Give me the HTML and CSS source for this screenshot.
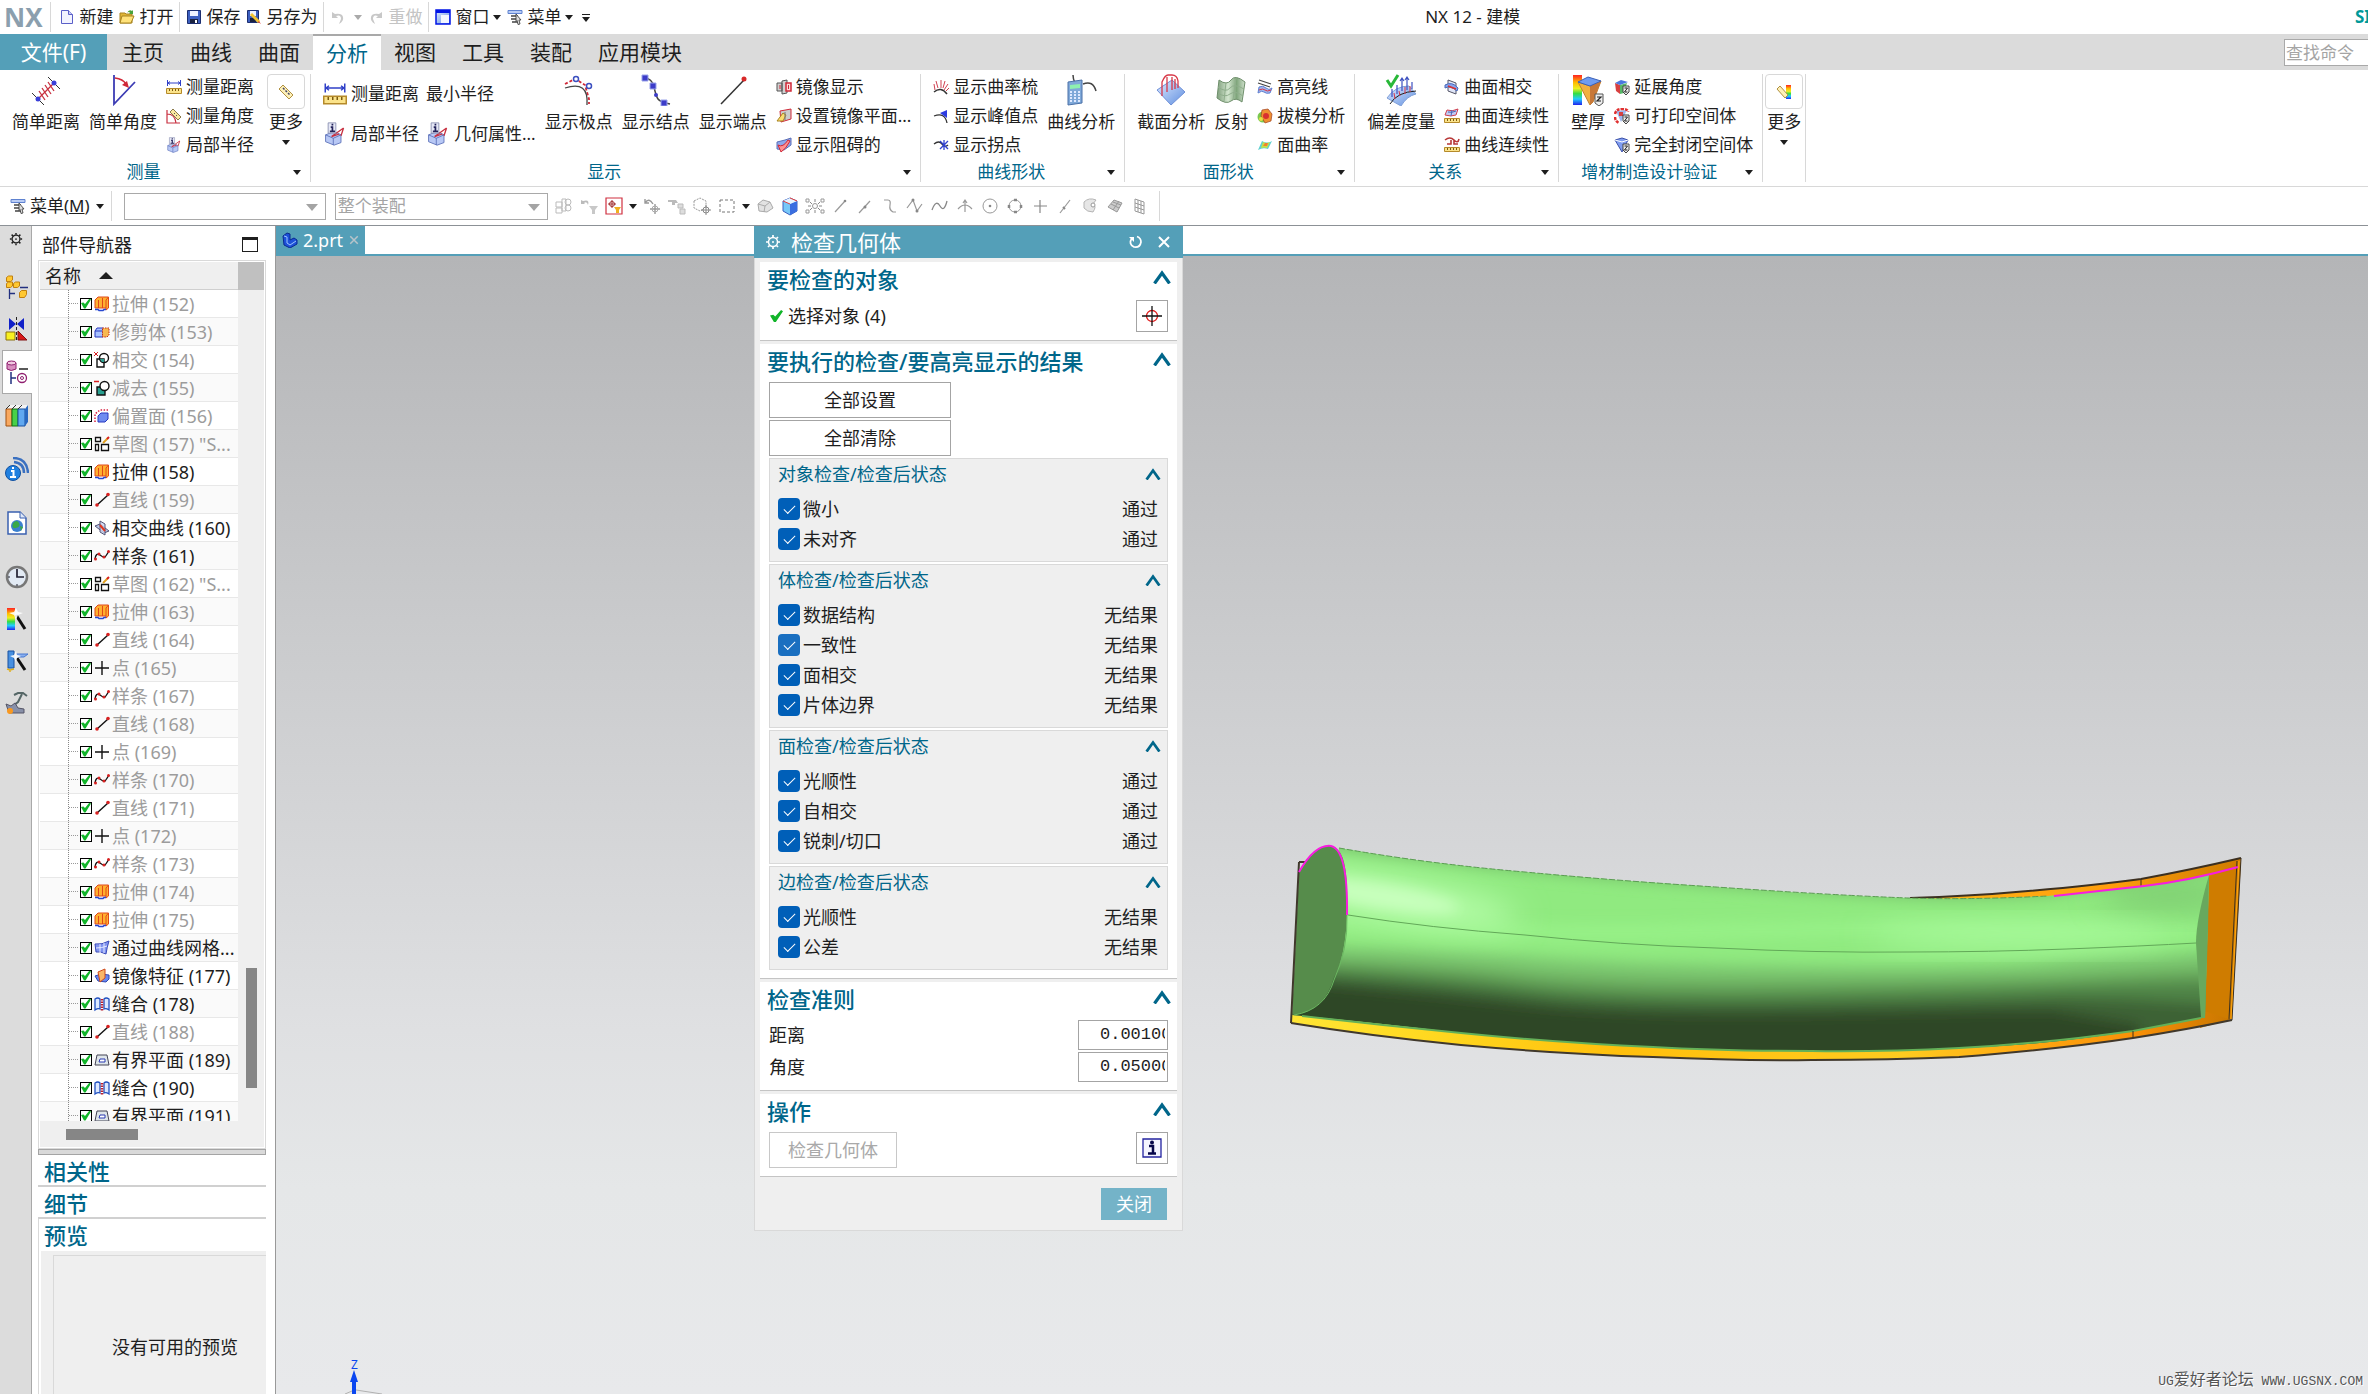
FILE: index.html
```html
<!DOCTYPE html>
<html lang="zh-CN">
<head>
    <meta charset="UTF-8">
    <meta name="viewport" content="width=device-width, initial-scale=1.0">
    <title>NX 12 - 建模</title>
    <link rel="stylesheet" href="styles.css">
</head>
<body>
    <!-- 图标 -->
    <svg class="sprite" aria-hidden="true">
      <defs>
        <linearGradient id="g-rainbow" x1="0" y1="0" x2="0" y2="1">
          <stop offset="0" stop-color="#f22"/><stop offset=".25" stop-color="#fb0"/><stop offset=".45" stop-color="#ee2"/>
          <stop offset=".62" stop-color="#3d4"/><stop offset=".8" stop-color="#2cf"/><stop offset="1" stop-color="#22e"/>
        </linearGradient>
        <linearGradient id="g-blue" x1="0" y1="0" x2="1" y2="1">
          <stop offset="0" stop-color="#dfeaff"/><stop offset="1" stop-color="#5f8fe0"/>
        </linearGradient>
        <linearGradient id="g-green" x1="0" y1="0" x2="1" y2="0">
          <stop offset="0" stop-color="#7f9f7c"/><stop offset=".4" stop-color="#d3e6cf"/><stop offset=".7" stop-color="#7fa57b"/><stop offset="1" stop-color="#cfe0cc"/>
        </linearGradient>
      </defs>
      <symbol id="i-new" viewBox="0 0 16 16"><path d="M2.5 1.500h7l4 4v9h-11z" fill="#f2f3ff" stroke="#5a5fc8"/><path d="M9.500 1.500v4h4" fill="#c9ccf5" stroke="#5a5fc8"/></symbol>
      <symbol id="i-open" viewBox="0 0 16 16"><path d="M1 4h5l1 1h6v9H1z" fill="#e0b535" stroke="#a88420"/><path d="M3 7h12l-3 7H1z" fill="#ffe27a" stroke="#a88420"/><path d="M8 4q2-4 5-2l1-1v4h-4l1-1q-1-2-3 0z" fill="#49a33a"/></symbol>
      <symbol id="i-save" viewBox="0 0 16 16"><path d="M1.500 1.500h13v13h-13z" fill="#3c5fc0" stroke="#1c2e70"/><path d="M4 2h8v5H4z" fill="#eef2ff"/><path d="M4 10h8v4H4z" fill="#1a2240"/><path d="M9 11h2v3H9z" fill="#fff"/></symbol>
      <symbol id="i-saveas" viewBox="0 0 16 16"><path d="M1.500 1.500h11v12h-11z" fill="#3c5fc0" stroke="#1c2e70"/><path d="M4 2h6v5H4z" fill="#eef2ff"/><path d="M4 9h6v4H4z" fill="#1a2240"/><path d="M5 5l8 8" stroke="#f4c430" stroke-width="3"/><path d="M13 12l2 3-3-2z" fill="#d33"/></symbol>
      <symbol id="i-undo" viewBox="0 0 16 16"><path d="M2 3v6h6L6 7q5-2 5 3l-2 5q5-3 4-7T5 5z" fill="#c8c8c8"/></symbol>
      <symbol id="i-redo" viewBox="0 0 16 16"><path d="M14 3v6H8l2-2q-5-2-5 3l2 5Q2 12 3 8t8-3z" fill="#c8c8c8"/></symbol>
      <symbol id="i-window" viewBox="0 0 16 16"><path d="M1 1h14v14H1z" fill="url(#g-blue)" stroke="#0014e6" stroke-width="1.500"/><path d="M1 1h14v3H1z" fill="#0014e6"/><path d="M6 6h8v8H6z" fill="#f2f6ff"/></symbol>
      <symbol id="i-menu" viewBox="0 0 16 16"><path d="M1 1.500h14v3H1z" fill="#b9ccf5" stroke="#5f82d0"/><path d="M4 7h7M4 10h7M5 13h7" stroke="#444" stroke-width="1.500"/><path d="M9 5l5 6h-2l1 4-2 .500-1-4-1 1z" fill="#ddd" stroke="#333" stroke-width=".8"/></symbol>
      <symbol id="i-simpledist" viewBox="0 0 32 32"><path d="M2 19l12 12M18 3l12 12" stroke="#333"/><path d="M8 25L24 9M12 14l6 9M15 11l6 9M18 8l6 9M9 17l6 9" stroke="#c83040" stroke-width="1.300"/><circle cx="8" cy="25" r="2.500" fill="#3a3fd8"/><circle cx="24" cy="9" r="2.500" fill="#3a3fd8"/></symbol>
      <symbol id="i-simpleang" viewBox="0 0 32 32"><path d="M7 1v29L28 8" fill="none" stroke="#3c3cb4" stroke-width="1.800"/><path d="M8 4q8 1 11 6" fill="none" stroke="#d02838" stroke-width="1.500"/><path d="M22 14l-7-3 5-4z" fill="#d02838"/></symbol>
      <symbol id="i-mdist" viewBox="0 0 16 16"><path d="M1.500 1v6M14.500 1v6M2 4h12M4 2.500L2 4l2 1.500M12 2.500L14 4l-2 1.500" fill="none" stroke="#3040c8"/><path d="M.5 9.500h15v5H.5z" fill="#fbe38a" stroke="#b58a2a"/><path d="M3.500 10v2M6.500 10v2M9.500 10v2M12.500 10v2" stroke="#7a5a10"/></symbol>
      <symbol id="i-mang" viewBox="0 0 16 16"><path d="M1 2v13h13M1 6q8 0 9 9" fill="none" stroke="#c83040" stroke-width="1.200"/><path d="M7 1l8 8-3 3-8-8z" fill="#fbe9a0" stroke="#8a7a4a"/><path d="M8 5l1 1M10 7l1 1" stroke="#555"/></symbol>
      <symbol id="i-info3d" viewBox="0 0 24 28"><path d="M1 15l10-4 8 4v9l-8 3-10-4z" fill="#b8c8f5" stroke="#5a6fb8"/><path d="M1 15l9 4 9-4M10 19v8" fill="none" stroke="#5a6fb8"/><path d="M8 17l14-10M8 17l9-3M22 7l-3 9" stroke="#c83040" stroke-width="1.500" fill="none"/><path d="M4 1h9v12H4z" fill="#e6e8f6" stroke="#888eb0"/><path d="M7 6h2v5M6 11h6M8 3h2" stroke="#23235a" stroke-width="2" fill="none"/></symbol>
      <symbol id="i-ruler" viewBox="0 0 16 16"><path d="M5 1l10 10-4 4L1 5z" fill="#fdf0b8" stroke="#b09040"/><path d="M5 4l1.500 1.500M7.500 6.500L9 8M10 9l1.500 1.500" stroke="#446" stroke-width="1.500"/></symbol>
      <symbol id="i-pole" viewBox="0 0 32 32"><path d="M2 10l8-4h4l8 5 4 14 0 5" fill="none" stroke="#d02838" stroke-width="1.800" stroke-dasharray="3 2"/><path d="M2 14q24-8 22 17" fill="none" stroke="#444" stroke-width="1.300"/><g fill="#fff" stroke="#3c50c0" stroke-width="1.500"><circle cx="13" cy="5" r="2.500"/><circle cx="26" cy="12" r="2.500"/></g></symbol>
      <symbol id="i-knot" viewBox="0 0 32 32"><path d="M4 4q8 0 10 9t4 12 12 5" fill="none" stroke="#444" stroke-width="1.500"/><g fill="#3c3cc8" stroke="#9aa4ea"><path d="M2 1h6v6H2zM10 9h6v6h-6zM21 26h6v6h-6z"/></g><circle cx="16" cy="21" r="2" fill="#3c3cc8"/></symbol>
      <symbol id="i-end" viewBox="0 0 32 32"><path d="M4 30L27 6" stroke="#333" stroke-width="1.500"/><circle cx="27" cy="5" r="2.500" fill="#d82828"/></symbol>
      <symbol id="i-mirror1" viewBox="0 0 16 16"><path d="M1 4h5v8H1zM6 2l5-1v13l-5 1z" fill="#d0d0d0" stroke="#555"/><path d="M10 4h5v8h-5z" fill="#ffd8d8" stroke="#d02838" stroke-width="1.500"/><path d="M4 6v4M12.500 6v4" stroke="#d02838"/></symbol>
      <symbol id="i-mirror2" viewBox="0 0 16 16"><path d="M4 3l11-2v10L5 14z" fill="#ccc" stroke="#d02838"/><path d="M1 13l6-8 3 2-3 6z" fill="#fbdc70" stroke="#a88420"/><path d="M9 4v8" stroke="#777"/></symbol>
      <symbol id="i-mirror3" viewBox="0 0 16 16"><path d="M1 5l8-2 6-2v7L8 13 1 12z" fill="#8ea8ec" stroke="#5a6fb8"/><path d="M2 8q5 3 10-5l2 1Q10 12 5 15z" fill="#ff9090" stroke="#d02838"/></symbol>
      <symbol id="i-comb" viewBox="0 0 16 16"><path d="M1 13q7-6 13 2" fill="none" stroke="#333" stroke-width="1.500"/><path d="M2 11L1 5M5 9L3 2M8 9V1M10 9l2-7M11 11l4-6M13 12l3-3" stroke="#d04050"/></symbol>
      <symbol id="i-peak" viewBox="0 0 16 16"><path d="M1 8q11-4 13 7" fill="none" stroke="#333" stroke-width="1.300"/><path d="M7 5l7-3v8z" fill="#2c3ce0"/></symbol>
      <symbol id="i-inflect" viewBox="0 0 16 16"><path d="M1 7q5-4 8 0t6 1" fill="none" stroke="#333" stroke-width="1.300"/><path d="M7 4l8 8M15 4l-8 8M11 3v10" stroke="#3040d0" stroke-width="1.300"/></symbol>
      <symbol id="i-calc" viewBox="0 0 32 32"><path d="M8 1q0 4 2 8M18 10q10-4 13 7" fill="none" stroke="#444" stroke-width="1.500"/><path d="M3 8l14-2v23L3 31z" fill="#7fa8d8" stroke="#4a70a8"/><path d="M5 11l10-1v4L5 15z" fill="#8ef0b0"/><path d="M5 18h10M5 21h10M5 24h10M5 27h10" stroke="#dfe9ff" stroke-dasharray="2 2" stroke-width="1.800"/></symbol>
      <symbol id="i-section" viewBox="0 0 32 32"><path d="M2 16L17 6l13 12-14 13z" fill="url(#g-blue)" stroke="#6f90d8"/><path d="M7 22V8q3-7 6-7h4q5 0 6 6v7M12 18V3M17 16V3M20 15V5" fill="none" stroke="#d83848" stroke-width="1.300"/></symbol>
      <symbol id="i-reflect" viewBox="0 0 32 32"><path d="M4 6q8 6 12 0t14 2l-3 20q-6-5-11-1T2 24z" fill="url(#g-green)" stroke="#6f8f6c"/><path d="M3 13q8 6 12 1t14 1M3 19q7 5 12 1t13 2M11 8L9 27M21 4l-3 22" fill="none" stroke="#8fae8c"/></symbol>
      <symbol id="i-hilite" viewBox="0 0 16 16"><path d="M2 1l12 4M1 4l12 4" stroke="#444" stroke-width="1.200"/><path d="M2 8q4-2 7 1t6 0l-2 5q-4 1-6-1t-6 1z" fill="#9fb6ee" stroke="#5f7fd0"/><path d="M2 11q4-2 6 0t6 0" fill="none" stroke="#d83848"/></symbol>
      <symbol id="i-draft" viewBox="0 0 16 16"><circle cx="6" cy="9" r="5.500" fill="#7bc850"/><path d="M5 2l6-1 4 5-1 7-6 2-4-7z" fill="#f09030" stroke="#a04020" stroke-width=".7"/><circle cx="9" cy="8" r="3" fill="#d83030"/><circle cx="4" cy="11" r="2" fill="#e8e040"/></symbol>
      <symbol id="i-facecurv" viewBox="0 0 16 16"><path d="M5 4q5 3 10 0l-4 8q-5-2-10 1z" fill="#5fd0d0"/><path d="M6 5q4 2 7 0l-3 6q-3-1-6 0z" fill="#c8e040"/><path d="M8 6h3l-1 3H6z" fill="#f08030"/></symbol>
      <symbol id="i-deviate" viewBox="0 0 32 32"><path d="M2 24q8-12 22-12l7 8Q22 22 16 32z" fill="url(#g-blue)" stroke="#7f9fd8"/><path d="M5 30Q12 18 31 17" fill="none" stroke="#222"/><path d="M7 23v-8M12 20v-9M17 17V5M22 16V3M27 15V8M15 7l2-3 2 3M20 6l2-3 2 3" stroke="#3c50c0" fill="none" stroke-width="1.200"/><path d="M10 25l-1-6M15 22l-1-5M20 20v-7M25 18v-6" stroke="#d83848"/><path d="M2 6l4 6 7-11" fill="none" stroke="#28b838" stroke-width="3"/></symbol>
      <symbol id="i-rel1" viewBox="0 0 16 16"><path d="M4 1l8 3v11l-8-3z" fill="#e0e6f8" stroke="#556"/><path d="M1 6q7-4 13 3l-1 3Q6 6 1 9z" fill="#86a4ee" stroke="#4a68b8"/><path d="M4 7l8 3" stroke="#d83030" stroke-width="1.500"/></symbol>
      <symbol id="i-rel2" viewBox="0 0 16 16"><path d="M3 2q5 2 11-1l-2 6Q7 9 1 7z" fill="#c0ccf4" stroke="#d04050"/><path d="M8 2L7 8M4 4q4 1 8-1" stroke="#4a68b8" fill="none"/><path d="M.5 10.500h15v4H.5z" fill="#fbe38a" stroke="#b58a2a"/><path d="M3.500 11v2M6.500 11v2M9.500 11v2M12.500 11v2" stroke="#7a5a10"/></symbol>
      <symbol id="i-rel3" viewBox="0 0 16 16"><path d="M1 3q5-4 9 0t5-1M7 3v4H3M10 3v4h4" fill="none" stroke="#b83838" stroke-width="1.600"/><path d="M.5 10.500h15v4H.5z" fill="#fbe38a" stroke="#b58a2a"/><path d="M3.500 11v2M6.500 11v2M9.500 11v2M12.500 11v2" stroke="#7a5a10"/></symbol>
      <symbol id="i-wall" viewBox="0 0 32 32"><path d="M1 1h9v30H1z" fill="url(#g-rainbow)"/><path d="M6 8l12 4 11-5-8 21-3 3z" fill="#f0b040" stroke="#c08030"/><path d="M18 12l11-5-8 21-3 3z" fill="#c87838"/><path d="M6 8l10-5 13 4-11 5z" fill="#6f9cf0" stroke="#3a60b8"/><path d="M23 20h8v9l-4 3-4-3z" fill="#eee" stroke="#555"/><path d="M25 23h4l-4 4h4" fill="none" stroke="#222" stroke-width="1.200"/></symbol>
      <symbol id="i-am1" viewBox="0 0 16 16"><path d="M1 4l5 2v9L2 12z" fill="#d84040"/><path d="M6 6l7-2-3 10-4 1z" fill="#58b868"/><path d="M1 4l6-3 7 2-8 3z" fill="#4a78e0"/><path d="M9 7h6v6l-3 3-3-3z" fill="#eee" stroke="#444"/><path d="M10.500 9h3l-3 4h3" fill="none" stroke="#222"/></symbol>
      <symbol id="i-am2" viewBox="0 0 16 16"><path d="M2 3l5 11 6-12z" fill="#9fb6ee"/><path d="M1 6q1-5 7-5t6 3M1 9q0 4 4 6" fill="none" stroke="#e03030" stroke-width="2.500" stroke-dasharray="3 1"/><path d="M5 4h4v4H5z" fill="#d84040"/><path d="M9 7h6v6l-3 3-3-3z" fill="#eee" stroke="#444"/><path d="M10.500 9h3l-3 4h3" fill="none" stroke="#222"/></symbol>
      <symbol id="i-am3" viewBox="0 0 16 16"><path d="M1 3l7-2 6 2-6 12z" fill="#7f9cf0" stroke="#3a50a8"/><path d="M1 3l7 2 6-2" fill="none" stroke="#fff"/><path d="M9 7h6v6l-3 3-3-3z" fill="#eee" stroke="#444"/><path d="M10.500 9h3l-3 4h3" fill="none" stroke="#222"/></symbol>
      <symbol id="i-more2" viewBox="0 0 16 16"><path d="M10 1h5v14h-5z" fill="url(#g-rainbow)"/><path d="M4 2l8 9-3 3-8-9z" fill="#fdf0b8" stroke="#b09040"/></symbol>
      <!-- 选择条 -->
      <symbol id="s-1" viewBox="0 0 20 20"><path d="M2 6h6v5H2zM2 12h6v5H2zM8 3h4v12H8z" fill="none" stroke="#bbb"/><circle cx="14" cy="6" r="3" fill="none" stroke="#bbb"/><circle cx="14" cy="12" r="3" fill="none" stroke="#bbb"/></symbol>
      <symbol id="s-2" viewBox="0 0 20 20"><path d="M2 4v4h4L5 7q3-2 4 2 2-6-5-4z" fill="#bbb"/><path d="M10 10h9l-3 4v4h-3v-4z" fill="#c8c8c8"/></symbol>
      <symbol id="s-3" viewBox="0 0 20 20"><path d="M2 2h16v16H2z" fill="#fff" stroke="#d03040" stroke-width="1.200"/><circle cx="8" cy="8" r="2.500" fill="none" stroke="#a03030"/><path d="M8 4v8M4 8h8" stroke="#a03030"/><path d="M10 11h7l-2 3v3h-3v-3z" fill="#f0b020"/></symbol>
      <symbol id="s-4" viewBox="0 0 20 20"><path d="M3 7q4-6 8 1M3 3v4h4M13 8v10M8 13h10" fill="none" stroke="#999" stroke-width="1.400"/><circle cx="13" cy="13" r="3" fill="none" stroke="#aaa"/></symbol>
      <symbol id="s-5" viewBox="0 0 20 20"><path d="M1 4h8l2 3H8v2H5V6H1z" fill="#bbb"/><path d="M11 8h5v4h-5zM13 13h5v5h-5z" fill="#ddd" stroke="#bbb"/></symbol>
      <symbol id="s-6" viewBox="0 0 20 20"><path d="M2 5l6-3 6 3v7l-6 3-6-3z" fill="none" stroke="#999" stroke-dasharray="2 1"/><circle cx="14" cy="14" r="3" fill="#fff" stroke="#888"/><path d="M14 9v10M9 14h10" stroke="#888"/></symbol>
      <symbol id="s-7" viewBox="0 0 20 20"><path d="M3 4h14v12H3z" fill="none" stroke="#777" stroke-dasharray="3 2"/></symbol>
      <symbol id="s-8" viewBox="0 0 20 20"><path d="M3 8l5-4 7 2 3 6-6 4-8-1z" fill="#e2e2e2" stroke="#aaa"/><path d="M3 8l7 2 5-4M10 10l-1 6" fill="none" stroke="#aaa"/></symbol>
      <symbol id="s-9" viewBox="0 0 20 20"><path d="M3 5l7-3 7 3v10l-7 4-7-4z" fill="#78c8f8" stroke="#3a60c0"/><path d="M10 8l7-3v10l-7 4z" fill="#3a6ee0"/><path d="M3 5l7 3 7-3-7-3z" fill="#e8f4ff"/><path d="M3 5l7 3M10 2l7 3" stroke="#e04040"/></symbol>
      <symbol id="s-10" viewBox="0 0 20 20"><circle cx="10" cy="10" r="2.500" fill="none" stroke="#999"/><g fill="#fff" stroke="#999"><path d="M1 3h3v3H1zM16 3h3v3h-3zM1 14h3v3H1zM16 14h3v3h-3z"/></g><path d="M10 3v3M10 14v3M3 10h3M14 10h3M5 6l2 2M15 6l-2 2M5 14l2-2M15 14l-2-2" stroke="#888"/></symbol>
      <symbol id="s-11" viewBox="0 0 20 20"><path d="M5 16L15 5" stroke="#999" stroke-width="1.200"/><circle cx="15" cy="5" r="1.300" fill="#888"/></symbol>
      <symbol id="s-12" viewBox="0 0 20 20"><path d="M4 17L15 5" stroke="#999" stroke-width="1.200"/><circle cx="10" cy="11" r="1.500" fill="#888"/></symbol>
      <symbol id="s-13" viewBox="0 0 20 20"><path d="M4 4h4q3 0 2 5t3 7h3" fill="none" stroke="#999" stroke-width="1.200"/></symbol>
      <symbol id="s-14" viewBox="0 0 20 20"><path d="M2 12L8 4l4 11 5-7" fill="none" stroke="#999" stroke-width="1.200"/><circle cx="8" cy="4" r="1.500" fill="#888"/><circle cx="12" cy="15" r="1.500" fill="#888"/></symbol>
      <symbol id="s-15" viewBox="0 0 20 20"><path d="M2 14q4-11 8-4t7-5" fill="none" stroke="#888" stroke-width="1.300"/></symbol>
      <symbol id="s-16" viewBox="0 0 20 20"><path d="M3 13q7-8 14 0M10 4v12M8 7l2-3 2 3" fill="none" stroke="#999" stroke-width="1.200"/></symbol>
      <symbol id="s-17" viewBox="0 0 20 20"><circle cx="10" cy="10" r="7" fill="none" stroke="#999"/><circle cx="10" cy="10" r="1.300" fill="#888"/></symbol>
      <symbol id="s-18" viewBox="0 0 20 20"><circle cx="10" cy="10" r="6" fill="none" stroke="#999"/><path d="M9 4h3M9 16h3M4 9v3M16 9v3" stroke="#888" stroke-width="2.500"/></symbol>
      <symbol id="s-19" viewBox="0 0 20 20"><path d="M10 4v13M4 10h13" stroke="#888" stroke-width="1.200"/></symbol>
      <symbol id="s-20" viewBox="0 0 20 20"><path d="M5 17L15 4" stroke="#999" stroke-width="1.200"/><path d="M8 11l2 2" stroke="#888" stroke-width="2"/></symbol>
      <symbol id="s-21" viewBox="0 0 20 20"><path d="M4 6q5-5 12-2l-3 4q4 2 0 8-6 0-9-4z" fill="#e6e6e6" stroke="#b4b4b4"/><circle cx="13" cy="9" r="2" fill="#fff" stroke="#999"/></symbol>
      <symbol id="s-22" viewBox="0 0 20 20"><path d="M3 11l6-7 8 3-5 9z" fill="#ccc" stroke="#999"/><path d="M6 8l8 4M8 6l8 3M8 14l6-9" stroke="#999"/></symbol>
      <symbol id="s-23" viewBox="0 0 20 20"><path d="M5 3l9 3v12l-9-3zM5 7l9 3M5 11l9 3M8 4v12M11 5v12" fill="none" stroke="#999"/></symbol>
      <!-- 资源条 -->
      <symbol id="r-gear" viewBox="0 0 16 16"><circle cx="8" cy="8" r="4.500" fill="none" stroke="currentColor" stroke-width="1.500"/><circle cx="8" cy="8" r="1" fill="currentColor"/><path d="M8 1v2M8 13v2M1 8h2M13 8h2M3 3l1.500 1.500M11.500 11.500L13 13M13 3l-1.500 1.500M4.500 11.500L3 13" stroke="currentColor" stroke-width="1.700"/></symbol>
      <symbol id="r-asm" viewBox="0 0 24 24"><g fill="#ffc832" stroke="#c08010"><path d="M1.500 2.500l2-1.500h4v4l-2 1.500h-4zM1.500 8.500l2-1.500h4v4l-2 1.500h-4zM8.500 8.500l2-1.500h4v4l-2 1.500h-4zM14.500 17.500l2-2h5v4l-2 3h-5z"/></g><path d="M4.500 14v10M4 18.500h6M15 12.500h8" stroke="#223080" stroke-width="1.300"/></symbol>
      <symbol id="r-con" viewBox="0 0 24 24"><path d="M4 1l7 6-7 6zM19 1l-7 6 7 6z" fill="#1020c8"/><path d="M11.500 0v24" stroke="#222" stroke-dasharray="3 2"/><path d="M1 15h9v8H1z" fill="#f8f020" stroke="#8a7010"/><path d="M13 14l9 9h-9z" fill="#d81818" stroke="#801010"/></symbol>
      <symbol id="r-part" viewBox="0 0 24 24"><path d="M1 3q4-3 9 0v6q-5 3-9 0z" fill="#d890c0" stroke="#902070"/><ellipse cx="5.500" cy="3" rx="4.500" ry="2" fill="#f0c8e0" stroke="#902070"/><path d="M13 9h9" stroke="#222" stroke-width="1.500"/><path d="M5 12v12M5 18h5" stroke="#223080" stroke-width="1.500"/><circle cx="16" cy="18" r="4.500" fill="#fff" stroke="#902070" stroke-width="1.300"/><circle cx="16" cy="18" r="1.500" fill="none" stroke="#902070"/></symbol>
      <symbol id="r-books" viewBox="0 0 24 24"><path d="M1 6l4-4h18v17l-3 4H1z" fill="#f4f4f4"/><path d="M1 6h6v17H1z" fill="#f8a860" stroke="#a05010"/><path d="M7 6h6v17H7z" fill="#48d048" stroke="#107010"/><path d="M13 6h7v17h-7z" fill="#60a8f0" stroke="#1850a0"/><path d="M20 6l3-4v17l-3 4z" fill="#2868c0"/><path d="M1 6l4-4M7 6l4-4M13 6l4-4" stroke="#333"/></symbol>
      <symbol id="r-info" viewBox="0 0 24 24"><circle cx="8" cy="16" r="7.500" fill="#2080e0" stroke="#1050a0"/><path d="M6 14h2.500v6M5 20h6M7 11h2" stroke="#fff" stroke-width="2" fill="none"/><path d="M8 1q14 0 15 15M9 5q10 1 10 11" fill="none" stroke="#3a70c0" stroke-width="2.500"/></symbol>
      <symbol id="r-doc" viewBox="0 0 24 24"><path d="M3 1h12l6 6v16H3z" fill="#fff" stroke="#3a60b0" stroke-width="1.500"/><path d="M15 1v6h6" fill="#dfe8f8" stroke="#3a60b0"/><circle cx="12" cy="15" r="6" fill="#3a80d0"/><path d="M8 12q4-4 6 0t-3 5-3-5zM15 15l3 1-2 4z" fill="#38a848"/></symbol>
      <symbol id="r-clock" viewBox="0 0 24 24"><circle cx="12" cy="12" r="10" fill="#e2eaf4" stroke="#777" stroke-width="2.500"/><path d="M12 4v8h7" fill="none" stroke="#223" stroke-width="1.700"/><path d="M12 19v2M3 12h2" stroke="#223"/></symbol>
      <symbol id="r-color" viewBox="0 0 24 24"><path d="M2 1h8v22H2z" fill="url(#g-rainbow)"/><path d="M11 8l9 14" stroke="#111" stroke-width="3"/><path d="M11 1l2 4 5 1-5 2-2 5-2-5-5-2 5-1z" fill="#fff" fill-opacity=".9"/></symbol>
      <symbol id="r-tool" viewBox="0 0 24 24"><path d="M3 2h6v17H3z" fill="#4890e0" stroke="#1850a0"/><path d="M11 5h12l-4 3h-7" fill="#8ab0f0" stroke="#4878d0"/><path d="M12 9l8 12" stroke="#111" stroke-width="3"/><path d="M11 2l1 4 4 1-4 2-1 4-2-4-4-2 4-1z" fill="#fff" fill-opacity=".9"/><path d="M2 20l3 1 4-1M5 21v2" stroke="#e0b020" stroke-width="1.500" fill="none"/></symbol>
      <symbol id="r-robot" viewBox="0 0 24 24"><path d="M9 4l4-2h5l4 3M17 3l-4 8-4 3" fill="none" stroke="#566" stroke-width="2"/><path d="M1 13l5 2 4-3 3 5 6 1v4H4z" fill="#8890a8" stroke="#556"/><circle cx="5" cy="20" r="3" fill="#f89820"/></symbol>
      <!-- 特征 -->
      <symbol id="t-extrude" viewBox="0 0 16 16"><path d="M1 4l3-3h10.500v11L12 14V12H1z" fill="#ffb030" stroke="#e04818"/><path d="M4.500 4v8M8.500 2v10M12 4v8M12 4l2.500-3" fill="none" stroke="#e04818"/><path d="M1 13.500h3l1 1h4l1-1h2" fill="none" stroke="#2848d0" stroke-width="1.500"/></symbol>
      <symbol id="t-trim" viewBox="0 0 16 16"><path d="M1 7l2-3h6v9H1z" fill="#a8c0ff" stroke="#2838c0"/><path d="M1 7h7" stroke="#2838c0"/><path d="M8.500 4h6.500v7l-2 2H8.500z" fill="#f8b850" stroke="#c02818" stroke-dasharray="1.500 1"/></symbol>
      <symbol id="t-intersect" viewBox="0 0 16 16"><path d="M3 7h7v8H3z" fill="#fff" stroke="#111" stroke-width="1.400"/><circle cx="10" cy="6" r="4.500" fill="none" stroke="#111" stroke-width="1.400"/><path d="M6 7h4v3H8z" fill="#28a090"/><path d="M0 0l4 4M4 0L0 4" stroke="#d82020"/></symbol>
      <symbol id="t-subtract" viewBox="0 0 16 16"><path d="M3 7h8v8H3z" fill="#28a090" stroke="#111" stroke-width="1.400"/><circle cx="10.500" cy="6" r="4.500" fill="#fff" stroke="#111" stroke-width="1.400"/><path d="M0 1.500h5" stroke="#d82020" stroke-width="1.500"/></symbol>
      <symbol id="t-offset" viewBox="0 0 16 16"><path d="M4 8l3-3h7v6l-3 3H4z" fill="#6f8cf0" stroke="#2838c0"/><path d="M1 14V6l5-4h8" fill="none" stroke="#d82040" stroke-dasharray="1.500 1.500" stroke-width="1.500"/></symbol>
      <symbol id="t-sketch" viewBox="0 0 16 16"><path d="M1.500 1.500h5v4h-5zM1.500 8.500h3v6h-3zM7.500 8.500h7v6h-7z" fill="#fff" stroke="#111" stroke-width="1.300"/><path d="M9 7l5-5" stroke="#e0a020" stroke-width="2"/><path d="M13 3l2-2" stroke="#d82020" stroke-width="2"/></symbol>
      <symbol id="t-line" viewBox="0 0 16 16"><path d="M3 13L14 3" stroke="#111" stroke-width="1.400"/><circle cx="3" cy="13" r="1.800" fill="#d82020"/><circle cx="14" cy="2.500" r="1.800" fill="#d82020"/></symbol>
      <symbol id="t-icurve" viewBox="0 0 16 16"><path d="M1 6l5-2 9 7-5 2z" fill="#b8c8e8" stroke="#557"/><path d="M6 1l5 3v11l-5-3z" fill="#c8d4f0" stroke="#557" fill-opacity=".8"/><path d="M6 5l5 6" stroke="#e03820" stroke-width="2"/></symbol>
      <symbol id="t-spline" viewBox="0 0 16 16"><path d="M1 11q1-7 5-4t5 2 4-6" fill="none" stroke="#111" stroke-width="1.400"/><circle cx="1.500" cy="11" r="1.500" fill="#d82020"/><circle cx="5" cy="6" r="1.500" fill="#d82020"/><circle cx="10" cy="9" r="1.500" fill="#d82020"/><circle cx="14.500" cy="3.500" r="1.500" fill="#d82020"/></symbol>
      <symbol id="t-point" viewBox="0 0 16 16"><path d="M8 1v14M1 8h14" stroke="#111" stroke-width="1.400"/></symbol>
      <symbol id="t-mesh" viewBox="0 0 16 16"><path d="M1 4q7 1 14-3-2 6-3 13-6-3-10-2z" fill="#8094f0" stroke="#3848b8"/><path d="M2 8q6 0 11-2M6 4v9M10 3v10" fill="none" stroke="#e6eaff"/></symbol>
      <symbol id="t-mirror" viewBox="0 0 16 16"><path d="M1 8l6-2 8 1v4l-3 3-8-1z" fill="#6888f0" stroke="#3048b0"/><path d="M4 4l7-3v9l-5 4z" fill="#f8b868" stroke="#d04818"/></symbol>
      <symbol id="t-sew" viewBox="0 0 16 16"><path d="M1 3q3-2 5 0v10q-2-1-5 1zM15 3q-3-2-5 0v10q2-1 5 1z" fill="#dce8ff" stroke="#2050c0" stroke-width="1.300"/><path d="M8 3v12" stroke="#b82030" stroke-width="2.500" stroke-dasharray="1.500 1"/></symbol>
      <symbol id="t-plane" viewBox="0 0 16 16"><path d="M3 3h10l2 10H1z" fill="#dfe6ea" stroke="#445"/><path d="M5 10l1-3h5v3z" fill="#fff" stroke="#2838b0"/></symbol>
      <symbol id="i-target" viewBox="0 0 20 20"><circle cx="10" cy="10" r="5.500" fill="none" stroke="#e01818" stroke-width="1.300"/><path d="M10 0v20M0 10h20" stroke="#111" stroke-width="1.300"/></symbol>
      <symbol id="i-ibox" viewBox="0 0 20 20"><path d="M1 1h18v18H1z" fill="#f4f4ff" stroke="#2424a0" stroke-width="1.300"/><path d="M7 8h4v7M6 15.500h8" fill="none" stroke="#06064a" stroke-width="2.500"/><circle cx="10" cy="4.500" r="2" fill="#06064a"/></symbol>
      <symbol id="i-prt" viewBox="0 0 16 16"><path d="M1 4l4-3 3 1v6l4-2 3 2v4l-7 4-6-3z" fill="#1c50d8" stroke="#0a2890"/><path d="M2 4l3 1v6l3 2M8 13l6-4" fill="none" stroke="#9cc4ff"/></symbol>
      <symbol id="i-reset" viewBox="0 0 16 16"><path d="M4 4q-4 6 2 9 6 1 7-5 0-4-4-5.500" fill="none" stroke="#fff" stroke-width="1.700"/><path d="M1 3h5v5z" fill="#fff"/></symbol>
      <symbol id="i-x" viewBox="0 0 16 16"><path d="M3 3l10 10M13 3L3 13" stroke="currentColor" stroke-width="2"/></symbol>
      <symbol id="i-up" viewBox="0 0 18 14"><path d="M1.500 13.500L9 3l7.500 10.500" fill="none" stroke="#00668a" stroke-width="3.200"/></symbol>
    </svg>

    <header class="qat">
      <b class="logo">NX</b>
      <i class="sep"></i>
      <button><svg><use href="#i-new"/></svg>新建</button>
      <button><svg><use href="#i-open"/></svg>打开</button>
      <i class="sep"></i>
      <button><svg><use href="#i-save"/></svg>保存</button>
      <button><svg><use href="#i-saveas"/></svg>另存为</button>
      <i class="sep"></i>
      <button class="off undo" aria-label="撤销"><svg><use href="#i-undo"/></svg><i class="arrow"></i></button>
      <button class="off"><svg><use href="#i-redo"/></svg>重做</button>
      <i class="sep"></i>
      <button><svg><use href="#i-window"/></svg>窗口<i class="arrow"></i></button>
      <button><svg><use href="#i-menu"/></svg>菜单<i class="arrow"></i></button>
      <button class="custom" aria-label="自定义"><i class="arrow"></i></button>
      <h1>NX 12 - 建模</h1>
      <b class="brand">SI</b>
    </header>

    <nav class="tabs">
      <button class="file">文件(F)</button>
      <button>主页</button>
      <button>曲线</button>
      <button>曲面</button>
      <button class="active">分析</button>
      <button>视图</button>
      <button>工具</button>
      <button>装配</button>
      <button>应用模块</button>
      <input class="search" type="text" placeholder="查找命令" aria-label="查找命令">
    </nav>

    <section class="ribbon">
      <div class="group">
        <div class="group_body">
          <button class="big"><svg><use href="#i-simpledist"/></svg>简单距离</button>
          <button class="big"><svg><use href="#i-simpleang"/></svg>简单角度</button>
          <div class="list">
            <button><svg><use href="#i-mdist"/></svg>测量距离</button>
            <button><svg><use href="#i-mang"/></svg>测量角度</button>
            <button><svg><use href="#i-info3d"/></svg>局部半径</button>
          </div>
          <button class="more"><span><svg><use href="#i-ruler"/></svg></span>更多<i class="arrow"></i></button>
        </div>
        <div class="group_name">测量<i class="arrow"></i></div>
      </div>
      <div class="group">
        <div class="group_body">
          <div class="mid">
            <button><svg><use href="#i-mdist"/></svg>测量距离</button>
            <button>最小半径</button>
            <button><svg><use href="#i-info3d"/></svg>局部半径</button>
            <button><svg><use href="#i-info3d"/></svg>几何属性...</button>
          </div>
          <button class="big"><svg><use href="#i-pole"/></svg>显示极点</button>
          <button class="big"><svg><use href="#i-knot"/></svg>显示结点</button>
          <button class="big"><svg><use href="#i-end"/></svg>显示端点</button>
          <div class="list">
            <button><svg><use href="#i-mirror1"/></svg>镜像显示</button>
            <button><svg><use href="#i-mirror2"/></svg>设置镜像平面...</button>
            <button><svg><use href="#i-mirror3"/></svg>显示阻碍的</button>
          </div>
        </div>
        <div class="group_name">显示<i class="arrow"></i></div>
      </div>
      <div class="group">
        <div class="group_body">
          <div class="list">
            <button><svg><use href="#i-comb"/></svg>显示曲率梳</button>
            <button><svg><use href="#i-peak"/></svg>显示峰值点</button>
            <button><svg><use href="#i-inflect"/></svg>显示拐点</button>
          </div>
          <button class="big"><svg><use href="#i-calc"/></svg>曲线分析</button>
        </div>
        <div class="group_name">曲线形状<i class="arrow"></i></div>
      </div>
      <div class="group">
        <div class="group_body">
          <button class="big"><svg><use href="#i-section"/></svg>截面分析</button>
          <button class="big"><svg><use href="#i-reflect"/></svg>反射</button>
          <div class="list">
            <button><svg><use href="#i-hilite"/></svg>高亮线</button>
            <button><svg><use href="#i-draft"/></svg>拔模分析</button>
            <button><svg><use href="#i-facecurv"/></svg>面曲率</button>
          </div>
        </div>
        <div class="group_name">面形状<i class="arrow"></i></div>
      </div>
      <div class="group">
        <div class="group_body">
          <button class="big"><svg><use href="#i-deviate"/></svg>偏差度量</button>
          <div class="list">
            <button><svg><use href="#i-rel1"/></svg>曲面相交</button>
            <button><svg><use href="#i-rel2"/></svg>曲面连续性</button>
            <button><svg><use href="#i-rel3"/></svg>曲线连续性</button>
          </div>
        </div>
        <div class="group_name">关系<i class="arrow"></i></div>
      </div>
      <div class="group">
        <div class="group_body">
          <button class="big"><svg><use href="#i-wall"/></svg>壁厚</button>
          <div class="list">
            <button><svg><use href="#i-am1"/></svg>延展角度</button>
            <button><svg><use href="#i-am2"/></svg>可打印空间体</button>
            <button><svg><use href="#i-am3"/></svg>完全封闭空间体</button>
          </div>
        </div>
        <div class="group_name">增材制造设计验证<i class="arrow"></i></div>
      </div>
      <div class="group last">
        <button class="more"><span><svg><use href="#i-more2"/></svg></span>更多<i class="arrow"></i></button>
      </div>
    </section>

    <div class="selbar">
      <button class="menu"><svg><use href="#i-menu"/></svg>菜单(<u>M</u>)<i class="arrow"></i></button>
      <i class="sep"></i>
      <div class="combo"><select aria-label="类型过滤器" disabled><option></option></select></div>
      <div class="combo scope"><select aria-label="选择范围" disabled><option>整个装配</option></select></div>
      <div class="tools">
        <svg><use href="#s-1"/></svg>
        <svg><use href="#s-2"/></svg>
        <svg><use href="#s-3"/></svg>
        <i class="arrow"></i>
        <svg><use href="#s-4"/></svg>
        <svg><use href="#s-5"/></svg>
        <svg><use href="#s-6"/></svg>
        <svg><use href="#s-7"/></svg>
        <i class="arrow"></i>
        <svg><use href="#s-8"/></svg>
        <svg><use href="#s-9"/></svg>
        <svg><use href="#s-10"/></svg>
        <svg><use href="#s-11"/></svg>
        <svg><use href="#s-12"/></svg>
        <svg><use href="#s-13"/></svg>
        <svg><use href="#s-14"/></svg>
        <svg><use href="#s-15"/></svg>
        <svg><use href="#s-16"/></svg>
        <svg><use href="#s-17"/></svg>
        <svg><use href="#s-18"/></svg>
        <svg><use href="#s-19"/></svg>
        <svg><use href="#s-20"/></svg>
        <svg><use href="#s-21"/></svg>
        <svg><use href="#s-22"/></svg>
        <svg><use href="#s-23"/></svg>
      </div>
      <i class="sep"></i>
    </div>

    <div class="main">
      <aside class="rail">
        <button class="gear" aria-label="资源条选项"><svg><use href="#r-gear"/></svg></button>
        <button aria-label="装配导航器"><svg><use href="#r-asm"/></svg></button>
        <button aria-label="约束导航器"><svg><use href="#r-con"/></svg></button>
        <button class="active" aria-label="部件导航器"><svg><use href="#r-part"/></svg></button>
        <button aria-label="重用库"><svg><use href="#r-books"/></svg></button>
        <button class="wide" aria-label="HD3D 工具"><svg><use href="#r-info"/></svg></button>
        <button class="wide" aria-label="Web 浏览器"><svg><use href="#r-doc"/></svg></button>
        <button class="wide" aria-label="历史记录"><svg><use href="#r-clock"/></svg></button>
        <button aria-label="Process Studio"><svg><use href="#r-color"/></svg></button>
        <button aria-label="加工向导"><svg><use href="#r-tool"/></svg></button>
        <button aria-label="角色"><svg><use href="#r-robot"/></svg></button>
      </aside>

      <section class="panel">
        <div class="panel_title">部件导航器<button class="max" aria-label="最大化"></button></div>
        <div class="tree">
          <div class="tree_head"><span>名称</span></div>
          <div class="tree_body">
            <div class="rows">
              <label class="off"><input type="checkbox" checked><svg><use href="#t-extrude"/></svg>拉伸 (152)</label>
              <label class="off"><input type="checkbox" checked><svg><use href="#t-trim"/></svg>修剪体 (153)</label>
              <label class="off"><input type="checkbox" checked><svg><use href="#t-intersect"/></svg>相交 (154)</label>
              <label class="off"><input type="checkbox" checked><svg><use href="#t-subtract"/></svg>减去 (155)</label>
              <label class="off"><input type="checkbox" checked><svg><use href="#t-offset"/></svg>偏置面 (156)</label>
              <label class="off"><input type="checkbox" checked><svg><use href="#t-sketch"/></svg>草图 (157) "S...</label>
              <label><input type="checkbox" checked><svg><use href="#t-extrude"/></svg>拉伸 (158)</label>
              <label class="off"><input type="checkbox" checked><svg><use href="#t-line"/></svg>直线 (159)</label>
              <label><input type="checkbox" checked><svg><use href="#t-icurve"/></svg>相交曲线 (160)</label>
              <label><input type="checkbox" checked><svg><use href="#t-spline"/></svg>样条 (161)</label>
              <label class="off"><input type="checkbox" checked><svg><use href="#t-sketch"/></svg>草图 (162) "S...</label>
              <label class="off"><input type="checkbox" checked><svg><use href="#t-extrude"/></svg>拉伸 (163)</label>
              <label class="off"><input type="checkbox" checked><svg><use href="#t-line"/></svg>直线 (164)</label>
              <label class="off"><input type="checkbox" checked><svg><use href="#t-point"/></svg>点 (165)</label>
              <label class="off"><input type="checkbox" checked><svg><use href="#t-spline"/></svg>样条 (167)</label>
              <label class="off"><input type="checkbox" checked><svg><use href="#t-line"/></svg>直线 (168)</label>
              <label class="off"><input type="checkbox" checked><svg><use href="#t-point"/></svg>点 (169)</label>
              <label class="off"><input type="checkbox" checked><svg><use href="#t-spline"/></svg>样条 (170)</label>
              <label class="off"><input type="checkbox" checked><svg><use href="#t-line"/></svg>直线 (171)</label>
              <label class="off"><input type="checkbox" checked><svg><use href="#t-point"/></svg>点 (172)</label>
              <label class="off"><input type="checkbox" checked><svg><use href="#t-spline"/></svg>样条 (173)</label>
              <label class="off"><input type="checkbox" checked><svg><use href="#t-extrude"/></svg>拉伸 (174)</label>
              <label class="off"><input type="checkbox" checked><svg><use href="#t-extrude"/></svg>拉伸 (175)</label>
              <label><input type="checkbox" checked><svg><use href="#t-mesh"/></svg>通过曲线网格...</label>
              <label><input type="checkbox" checked><svg><use href="#t-mirror"/></svg>镜像特征 (177)</label>
              <label><input type="checkbox" checked><svg><use href="#t-sew"/></svg>缝合 (178)</label>
              <label class="off"><input type="checkbox" checked><svg><use href="#t-line"/></svg>直线 (188)</label>
              <label><input type="checkbox" checked><svg><use href="#t-plane"/></svg>有界平面 (189)</label>
              <label><input type="checkbox" checked><svg><use href="#t-sew"/></svg>缝合 (190)</label>
              <label><input type="checkbox" checked><svg><use href="#t-plane"/></svg>有界平面 (191)</label>
            </div>
            <div class="vscroll"><i></i></div>
          </div>
          <div class="hscroll"><i></i></div>
        </div>
        <div class="splitter"></div>
        <h2>相关性</h2>
        <h2>细节</h2>
        <div class="preview">
          <h2>预览</h2>
          <div class="preview_body"><p>没有可用的预览</p></div>
        </div>
      </section>

      <section class="view">
        <div class="view_tabs">
          <button><svg><use href="#i-prt"/></svg>2.prt<svg class="x"><use href="#i-x"/></svg></button>
        </div>
        <div class="canvas">
          <svg class="model" viewBox="0 0 1000 260">
            <defs>
              <linearGradient id="m-band" x1="0" x2="1" y1="0" y2="0">
                <stop offset="0" stop-color="#ffe535"/><stop offset=".15" stop-color="#ffd820"/><stop offset=".35" stop-color="#ffbf0c"/>
                <stop offset=".65" stop-color="#ffcb20"/><stop offset=".78" stop-color="#ffa812"/><stop offset=".9" stop-color="#f89008"/><stop offset="1" stop-color="#c87600"/>
              </linearGradient>
              <linearGradient id="m-back" x1="0" x2="1" y1="0" y2="0">
                <stop offset="0" stop-color="#ffb81a"/><stop offset=".6" stop-color="#ff9e0c"/><stop offset="1" stop-color="#cf7c00"/>
              </linearGradient>
              <clipPath id="m-clip"><path d="M69 28Q160 44 255 52 350 61 446 67 560 75 638 78 700 80 778 76 870 69 939 55L935 197 863 211Q770 226 689 228 610 232 542 231 450 231 383 227 290 223 191 213 100 202 22 195L56 150z"/></clipPath>
              <filter id="m-soft" x="-20%" y="-50%" width="140%" height="200%"><feGaussianBlur stdDeviation="7"/></filter>
              <filter id="m-wide" x="-50%" y="-80%" width="200%" height="260%"><feGaussianBlur stdDeviation="16"/></filter>
            </defs>
            <path d="M640 78Q700 76 746 72 820 66 871 59 920 50 971 38L965 120H900L700 100z" fill="url(#m-back)"/>
            <path d="M640 78Q700 76 746 72 820 66 871 59 920 50 971 38" fill="none" stroke="#3c3020" stroke-width="2"/>
            <path d="M936 58L971 42 962 199 930 208z" fill="#cf7c00"/>
            <path d="M971 38L962 200M967 41L959 199" stroke="#3c3020" fill="none"/>
            <path d="M969 41L961 199" stroke="#ffa812" fill="none"/>
            <path d="M871 59v9" stroke="#3c3020"/>
            <path d="M21 195V203Q100 216 191 225 290 234 383 237 470 241 542 240 620 240 689 237 790 229 863 218 920 209 962 200L931 190z" fill="url(#m-band)"/>
            <path d="M21 203Q100 216 191 225 290 234 383 237 470 241 542 240 620 240 689 237 790 229 863 218 920 209 962 200" fill="none" stroke="#40382c" stroke-width="2"/>
            <g clip-path="url(#m-clip)">
              <path d="M0 0h1000v260H0z" fill="#90ea80"/>
              <g filter="url(#m-soft)">
                <path d="M-40 10Q160 36 255 44 350 53 446 59 560 67 638 70 700 72 778 68L1040 30" fill="none" stroke="#78c46c" stroke-width="16"/>
                <path d="M-40 92Q200 116 400 112T780 110 1040 104" fill="none" stroke="#98f288" stroke-width="14"/>
                <path d="M-40 124Q150 128 250 136T540 146 780 142 1040 128V300H-40z" fill="#7cc870"/>
                <path d="M-40 134Q150 142 250 152T540 160 780 156 1040 142V300H-40z" fill="#68a85c"/>
                <path d="M-40 142Q150 152 250 164T540 172 780 166 1040 158V300H-40z" fill="#508446"/>
                <path d="M-40 150Q150 162 250 174T540 183 780 178 1040 190V300H-40z" fill="#3c6234"/>
                <path d="M-40 156Q150 172 250 184T540 193 780 190L870 205V300H-40z" fill="#2d4628"/>
              </g>
              <ellipse cx="900" cy="75" rx="70" ry="14" fill="#7cc870" filter="url(#m-wide)"/>
              <ellipse cx="120" cy="78" rx="130" ry="20" transform="rotate(9 120 78)" fill="#b8ffac" filter="url(#m-wide)"/>
              <ellipse cx="110" cy="76" rx="80" ry="12" transform="rotate(9 110 76)" fill="#c8ffbd" filter="url(#m-soft)"/>
              <ellipse cx="750" cy="116" rx="150" ry="10" fill="#b0ffa4" filter="url(#m-wide)"/>
            </g>
            <path d="M939 55Q926 100 926 123L931 198H935L938 110z" fill="#68a85e"/>
            <path d="M69 28Q160 44 255 52 350 61 446 67 560 75 638 78 700 80 778 76" fill="none" stroke="#5c9c54" stroke-dasharray="6 2"/>
            <path d="M32 196Q110 205 191 213 290 223 383 227 450 231 542 231 610 232 689 228 770 224 863 211L931 198" fill="none" stroke="#64b058" stroke-width="2"/>
            <path d="M78 95Q160 108 255 115 350 125 446 128 550 133 638 132 720 132 797 129T926 123" fill="none" stroke="#62a858"/>
            <path d="M863 211v7" stroke="#3c3020"/>
            <path d="M29 52Q45 24 61 26 76 28 77 68 79 130 64 157 55 192 22 195z" fill="#568c4b"/>
            <path d="M77 95Q78 130 64 160 55 190 24 195" fill="none" stroke="#6cb862"/>
            <path d="M29 42L21 203M29 42h6" stroke="#40382c" stroke-width="2" fill="none"/>
            <path d="M29 52Q45 24 61 26 78 30 77 95" fill="none" stroke="#f81ce0" stroke-width="2"/>
            <path d="M784 76Q830 71 874 66T968 47" fill="none" stroke="#f81ce0" stroke-width="2"/>
          </svg>
          <svg class="triad" viewBox="0 0 60 36">
            <text x="6" y="11">Z</text>
            <path d="M9 12l4 12h-2v12H7V24H5z" fill="#0a46f0"/>
            <path d="M0 36l7-3M11 32l26 4" stroke="#b0b0b0" fill="none"/>
          </svg>
          <p class="mark">UG<span>爱好者论坛</span> WWW.UGSNX.COM</p>
        </div>

        <!-- 检查几何体对话框 -->
        <form class="dialog">
          <div class="dialog_title">
            <svg><use href="#r-gear"/></svg>
            <h2>检查几何体</h2>
            <button type="button" aria-label="重置"><svg><use href="#i-reset"/></svg></button>
            <button type="button" aria-label="关闭窗口"><svg><use href="#i-x"/></svg></button>
          </div>
          <div class="dialog_body">
            <div class="card">
              <h3>要检查的对象<svg><use href="#i-up"/></svg></h3>
              <div class="line">
                <span class="picked">选择对象 (4)</span>
                <button type="button" class="square" aria-label="选择对象"><svg><use href="#i-target"/></svg></button>
              </div>
            </div>
            <div class="card">
              <h3>要执行的检查/要高亮显示的结果<svg><use href="#i-up"/></svg></h3>
              <div class="stack">
                <button type="button" class="btn all">全部设置</button>
                <button type="button" class="btn all">全部清除</button>
                <div class="checks">
                  <h4>对象检查/检查后状态<svg><use href="#i-up"/></svg></h4>
                  <label><input type="checkbox" checked>微小<span>通过</span></label>
                  <label><input type="checkbox" checked>未对齐<span>通过</span></label>
                </div>
                <div class="checks">
                  <h4>体检查/检查后状态<svg><use href="#i-up"/></svg></h4>
                  <label><input type="checkbox" checked>数据结构<span>无结果</span></label>
                  <label class="hot"><input type="checkbox" checked>一致性<span>无结果</span></label>
                  <label><input type="checkbox" checked>面相交<span>无结果</span></label>
                  <label><input type="checkbox" checked>片体边界<span>无结果</span></label>
                </div>
                <div class="checks">
                  <h4>面检查/检查后状态<svg><use href="#i-up"/></svg></h4>
                  <label><input type="checkbox" checked>光顺性<span>通过</span></label>
                  <label><input type="checkbox" checked>自相交<span>通过</span></label>
                  <label><input type="checkbox" checked>锐刺/切口<span>通过</span></label>
                </div>
                <div class="checks">
                  <h4>边检查/检查后状态<svg><use href="#i-up"/></svg></h4>
                  <label><input type="checkbox" checked>光顺性<span>无结果</span></label>
                  <label><input type="checkbox" checked>公差<span>无结果</span></label>
                </div>
              </div>
            </div>
            <div class="card">
              <h3>检查准则<svg><use href="#i-up"/></svg></h3>
              <div class="stack">
                <div class="line"><label for="dist">距离</label><input id="dist" type="text" value="0.00100"></div>
                <div class="line"><label for="angle">角度</label><input id="angle" type="text" value="0.05000"></div>
              </div>
            </div>
            <div class="card">
              <h3>操作<svg><use href="#i-up"/></svg></h3>
              <div class="line top">
                <button type="button" class="btn run" disabled>检查几何体</button>
                <button type="button" class="square" aria-label="信息"><svg><use href="#i-ibox"/></svg></button>
              </div>
            </div>
            <div class="foot"><button type="button" class="close">关闭</button></div>
          </div>
        </form>
      </section>
    </div>
</body>
</html>
```
FILE: styles.css
```css
*{
    box-sizing: border-box;
}
body{
    margin: 0;
    height: 100vh;
    display: flex;
    flex-direction: column;
    overflow: hidden;
    background-color: #fff;
    color: #1e1e1e;
    font-family: "Noto Sans", "Noto Sans CJK SC", sans-serif;
    font-size: 17px;
    line-height: 24px;
}
button, input, select{
    margin: 0;
    padding: 0;
    border: 0;
    background: none;
    color: inherit;
    font: inherit;
    white-space: nowrap;
}
h1, h2, h3, h4, p{
    margin: 0;
    font-weight: 400;
}
svg{
    flex: none;
}
.sprite{
    position: absolute;
    width: 0;
    height: 0;
}
.sep{
    width: 1px;
    height: 30px;
    background-color: #d8d8d8;
}
.arrow{
    flex: none;
    border: 4px solid transparent;
    border-top: 5px solid #1e1e1e;
    border-bottom: 0;
}

/* 快速访问工具条 */
.qat{
    flex: none;
    display: flex;
    align-items: center;
    gap: 6px;
    height: 34px;
    padding-left: 4px;
}
.logo{
    margin-right: 2px;
    color: #8b9fae;
    font-family: "Open Sans", sans-serif;
    font-size: 26px;
}
.logo + .sep{
    margin-right: 2px;
}
.qat button{
    display: flex;
    align-items: center;
    gap: 4px;
}
.qat svg{
    width: 16px;
    height: 16px;
}
.qat .off{
    color: #c4c4c4;
}
.qat .undo{
    gap: 8px;
}
.undo .arrow{
    border-top-color: #aaa;
}
.custom .arrow{
    position: relative;
    margin: 4px 0 0 3px;
}
.custom .arrow::before{
    content: "";
    position: absolute;
    left: -4px;
    top: -8px;
    width: 8px;
    height: 1px;
    background-color: #1e1e1e;
}
.qat h1{
    flex: 1;
    text-align: center;
    font-size: 17px;
}
.brand{
    width: 13px;
    overflow: hidden;
    color: #099;
    font-size: 17px;
}

/* 选项卡 */
.tabs{
    flex: none;
    display: flex;
    align-items: center;
    height: 36px;
    background-color: #dbdbdb;
    font-size: 21px;
}
.tabs button{
    height: 36px;
    padding: 0 13px;
}
.tabs .file{
    width: 107px;
    margin-right: 2px;
    background-color: #549fb8;
    color: #fff;
}
.tabs .active{
    background-color: #fff;
    border-top: 2px solid #a9a9a9;
    color: #00668a;
}
.search{
    width: 84px;
    height: 27px;
    margin-left: auto;
    padding-left: 1px;
    border: 1px solid #a9a9a9;
    border-right: 0;
    background-color: #fff;
    font-size: 17px;
}
.search::placeholder{
    color: #a4a4a4;
}

/* 功能区 */
.ribbon{
    flex: none;
    display: flex;
    height: 117px;
    border-bottom: 1px solid #d8d8d8;
}
.group{
    display: flex;
    flex-direction: column;
    justify-content: space-between;
    height: 108px;
    margin-top: 4px;
    padding: 0 9px 0 12px;
    border-right: 1px solid #d8d8d8;
}
.group_body{
    display: flex;
    gap: 9px;
}
.big, .more{
    display: flex;
    flex-direction: column;
    align-items: center;
    height: 78px;
}
.big svg{
    width: 32px;
    height: 32px;
    margin-bottom: 4px;
}
.more span{
    display: flex;
    align-items: center;
    justify-content: center;
    width: 38px;
    height: 35px;
    border: 1px solid #d8d8d8;
    border-radius: 4px;
    margin-bottom: 1px;
}
.more svg, .list svg{
    width: 16px;
    height: 16px;
}
.list + .more{
    margin: 0 -4px 0 4px;
}
.more .arrow{
    margin-top: 6px;
}
.list{
    display: flex;
    flex-direction: column;
    align-items: flex-start;
    margin-top: -2px;
}
.list button, .mid button{
    display: flex;
    align-items: center;
    gap: 4px;
}
.list button{
    height: 29px;
}
.mid{
    display: grid;
    grid-template-columns: auto auto;
    grid-auto-rows: 40px;
    column-gap: 7px;
}
.mid svg{
    width: 24px;
    height: 24px;
}
.group_name{
    position: relative;
    display: flex;
    align-items: center;
    justify-content: center;
    height: 20px;
    padding-right: 26px;
    color: #00668a;
}
.group_name .arrow{
    position: absolute;
    right: 0;
}
.group.last{
    padding: 0 2px;
}

/* 选择条 */
.selbar{
    flex: none;
    display: flex;
    align-items: center;
    height: 39px;
    border-bottom: 1px solid #8c9196;
}
.menu{
    display: flex;
    align-items: center;
    padding: 0 7px 0 10px;
}
.menu svg{
    width: 16px;
    height: 16px;
    margin-right: 4px;
}
.menu .arrow{
    margin-left: 6px;
}
.combo{
    position: relative;
    width: 202px;
    height: 27px;
    margin-left: 12px;
}
.combo.scope{
    width: 213px;
    margin-left: 9px;
}
.combo select{
    appearance: none;
    width: 100%;
    height: 27px;
    padding-left: 2px;
    border: 1px solid #a9a9a9;
    color: #a4a4a4;
    opacity: 1;
}
.combo::after{
    content: "";
    position: absolute;
    right: 8px;
    top: 11px;
    border: 6px solid transparent;
    border-top: 7px solid #a4a4a4;
    border-bottom: 0;
}
.tools{
    display: flex;
    align-items: center;
    gap: 5px;
    margin: 0 9px 0 6px;
}
.tools svg{
    width: 20px;
    height: 20px;
}

/* 资源条 */
.main{
    flex: 1;
    display: flex;
    min-height: 0;
}
.rail{
    flex: none;
    display: flex;
    flex-direction: column;
    width: 32px;
    background-color: #dcdcdc;
    border-right: 1px solid #a9a9a9;
}
.rail button{
    display: flex;
    align-items: center;
    justify-content: center;
    height: 42px;
    margin-left: 2px;
}
.rail svg{
    width: 24px;
    height: 24px;
}
.rail .gear{
    height: 26px;
    margin-bottom: 14px;
    margin-left: 0;
}
.rail .gear svg{
    width: 14px;
    height: 14px;
}
.rail .active{
    height: 44px;
    margin-right: -1px;
    background-color: #fff;
    border: 1px solid #a9a9a9;
    border-right: 0;
}
.rail .active + button{
    margin-bottom: 6px;
}
.rail .wide{
    height: 54px;
}
.rail .wide + button:not(.wide){
    margin-top: -6px;
}

/* 部件导航器 */
.panel{
    flex: none;
    display: flex;
    flex-direction: column;
    width: 244px;
    padding: 0 9px 0 6px;
    border-right: 1px solid #999;
    font-size: 18px;
}
.panel_title{
    display: flex;
    align-items: center;
    justify-content: space-between;
    height: 34px;
    padding: 3px 8px 0 4px;
}
.max{
    width: 16px;
    height: 15px;
    border: 1px solid #1e1e1e;
    border-top-width: 3px;
}
.tree{
    flex: 1;
    display: flex;
    flex-direction: column;
    min-height: 0;
    padding: 1px;
    border: 1px solid #d9d9d9;
}
.tree_head{
    display: flex;
    height: 28px;
    background-color: #c0c0c0;
}
.tree_head span{
    display: flex;
    align-items: center;
    gap: 18px;
    width: 198px;
    padding-left: 5px;
    background-color: #efefef;
    border-bottom: 1px solid #cfcfcf;
}
.tree_head span::after{
    content: "";
    border: 7px solid transparent;
    border-bottom-color: #1e1e1e;
    border-top: 0;
}
.tree_body{
    flex: 1;
    display: flex;
    min-height: 0;
    background-color: #efefef;
}
.rows{
    width: 198px;
    overflow: hidden;
    background-color: #fff;
}
.rows label{
    display: flex;
    align-items: center;
    height: 28px;
    padding-left: 28px;
    border-bottom: 1px solid #e8e8e8;
    white-space: nowrap;
}
.rows label::before{
    content: "";
    align-self: stretch;
    width: 9px;
    margin-right: 2px;
    border-left: 1px dotted #888;
    background: repeating-linear-gradient(90deg, #999 0 1px, transparent 1px 2px) 0 13px / 9px 1px no-repeat;
}
.rows label:nth-child(even){
    background-color: #fafafa;
}
.rows .off{
    color: #9c9c9c;
}
.rows input{
    appearance: none;
    flex: none;
    width: 12px;
    height: 12px;
    border: 1px solid #000;
    background-color: #fff;
}
.rows input::before, .picked::before{
    content: "";
    display: block;
    width: 10px;
    height: 10px;
    background-color: #12b52a;
    clip-path: polygon(0 45%, 25% 40%, 40% 55%, 85% 0, 100% 10%, 45% 100%, 30% 100%);
}
.rows svg{
    width: 16px;
    height: 16px;
    margin: 0 2px;
}
.vscroll i{
    display: block;
    width: 11px;
    height: 120px;
    margin: 678px 0 0 8px;
    background-color: #868686;
}
.hscroll{
    height: 26px;
    padding: 8px 0 0 26px;
    background-color: #efefef;
}
.hscroll i{
    display: block;
    width: 72px;
    height: 11px;
    background-color: #868686;
}
.splitter{
    height: 6px;
    border: 1px solid #a4a4a4;
    background-color: #d9d9d9;
}
.panel h2{
    height: 32px;
    padding-left: 6px;
    border-bottom: 2px solid #d0d0d0;
    color: #00668a;
    font-size: 22px;
    font-weight: 500;
    line-height: 32px;
}
.preview{
    border-left: 1px solid #d9d9d9;
}
.panel .preview h2{
    padding-left: 5px;
    border: 0;
}
.preview_body{
    height: 143px;
    margin-left: 2px;
    padding: 4px 0 0 12px;
    background-color: #efefef;
}
.preview_body p{
    height: 139px;
    padding: 79px 0 0 58px;
    border: 1px solid #d9d9d9;
    border-width: 1px 0 0 1px;
    white-space: nowrap;
}

/* 图形窗口 */
.view{
    flex: 1;
    position: relative;
    display: flex;
    flex-direction: column;
    min-width: 0;
}
.view_tabs{
    height: 30px;
    border-bottom: 2px solid #549fb8;
}
.view_tabs button{
    display: flex;
    align-items: center;
    gap: 5px;
    width: 89px;
    height: 28px;
    padding-left: 6px;
    background-color: #549fb8;
    color: #fff;
    font-size: 18px;
}
.view_tabs svg{
    width: 16px;
    height: 16px;
}
.view_tabs .x{
    width: 12px;
    height: 12px;
    color: #b8c4ca;
}
.canvas{
    flex: 1;
    position: relative;
    background-image: linear-gradient(#b4b5b7 0%, #c9cacc 32%, #d4d5d7 50%, #dfe0e2 68%, #e5e7e8 82%, #e8e9eb 100%);
}
.model{
    position: absolute;
    left: 994px;
    top: 564px;
    width: 1000px;
    height: 260px;
}
.triad{
    position: absolute;
    left: 69px;
    bottom: 0;
    width: 60px;
    height: 36px;
    fill: #0a46f0;
    font-size: 12px;
}
.mark{
    position: absolute;
    right: 5px;
    bottom: 0;
    color: #555;
    font-family: "Liberation Mono", monospace;
    font-size: 13px;
    text-shadow: 1px 1px 0 #fff;
}
.mark span{
    font-family: "Noto Sans CJK SC", sans-serif;
    font-size: 16px;
}

/* 对话框 */
.dialog{
    position: absolute;
    left: 478px;
    top: 0;
    width: 429px;
    background-color: #efefef;
    font-size: 18px;
}
.dialog_title{
    display: flex;
    align-items: center;
    height: 32px;
    padding: 0 11px;
    background-color: #549fb8;
    color: #fff;
}
.dialog_title h2{
    flex: 1;
    margin-left: 10px;
    font-size: 22px;
}
.dialog_title svg{
    display: block;
    width: 16px;
    height: 16px;
}
.dialog_title button{
    margin-left: 12px;
}
.dialog_body{
    display: flex;
    flex-direction: column;
    gap: 3px;
    padding: 4px 5px 10px;
    border: 1px solid #d9d9d9;
    border-top: 0;
}
.card{
    padding: 0 9px 8px;
    background-color: #fff;
    border-bottom: 1px solid #c4c4c4;
}
.card h3{
    display: flex;
    align-items: center;
    justify-content: space-between;
    height: 34px;
    margin: 0 -3px 4px -2px;
    color: #00668a;
    font-size: 22px;
    font-weight: 500;
}
.card h3 svg{
    width: 18px;
    height: 14px;
    margin-bottom: 4px;
}
.line{
    display: flex;
    align-items: center;
    justify-content: space-between;
}
.line.top{
    align-items: flex-start;
}
.picked{
    display: flex;
    align-items: center;
    gap: 5px;
}
.picked::before{
    width: 13px;
    height: 12px;
    margin-left: 1px;
}
.square{
    display: flex;
    align-items: center;
    justify-content: center;
    width: 32px;
    height: 32px;
    border: 1px solid #a4a4a4;
}
.square svg{
    width: 20px;
    height: 20px;
}
.stack{
    display: flex;
    flex-direction: column;
    gap: 2px;
}
.btn{
    height: 36px;
    border: 1px solid #a4a4a4;
    background-color: #fff;
}
.all{
    width: 182px;
}
.run{
    width: 128px;
    border-color: #c8c8c8;
    color: #a9a9a9;
}
.checks{
    padding: 0 9px 7px 8px;
    border: 1px solid #d9d9d9;
    background-color: #efefef;
}
.checks h4{
    display: flex;
    align-items: center;
    justify-content: space-between;
    height: 29px;
    margin: 0 -3px 6px 0;
    color: #00668a;
    font-size: 18px;
}
.checks h4 svg{
    width: 16px;
    height: 12px;
}
.checks label{
    display: flex;
    align-items: center;
    gap: 3px;
    height: 30px;
}
.checks label span{
    margin-left: auto;
}
.checks input{
    appearance: none;
    display: flex;
    width: 22px;
    height: 22px;
    border-radius: 4px;
    background-color: #005fb8;
}
.checks input::before{
    content: "";
    width: 10px;
    height: 5px;
    margin: 7px 0 0 6px;
    border: 1px solid #fff;
    border-width: 0 0 1px 1px;
    transform: rotate(-45deg);
}
.checks .hot input{
    background-color: #1a6fc0;
}
.line input{
    width: 90px;
    height: 30px;
    padding: 0 2px 2px 21px;
    border: 1px solid #a4a4a4;
    font-family: "Liberation Mono", monospace;
    font-size: 17px;
}
.foot{
    display: flex;
    justify-content: flex-end;
    padding: 8px 10px 0 0;
}
.close{
    width: 66px;
    height: 32px;
    background-color: #74b3c8;
    color: #fff;
}
```
